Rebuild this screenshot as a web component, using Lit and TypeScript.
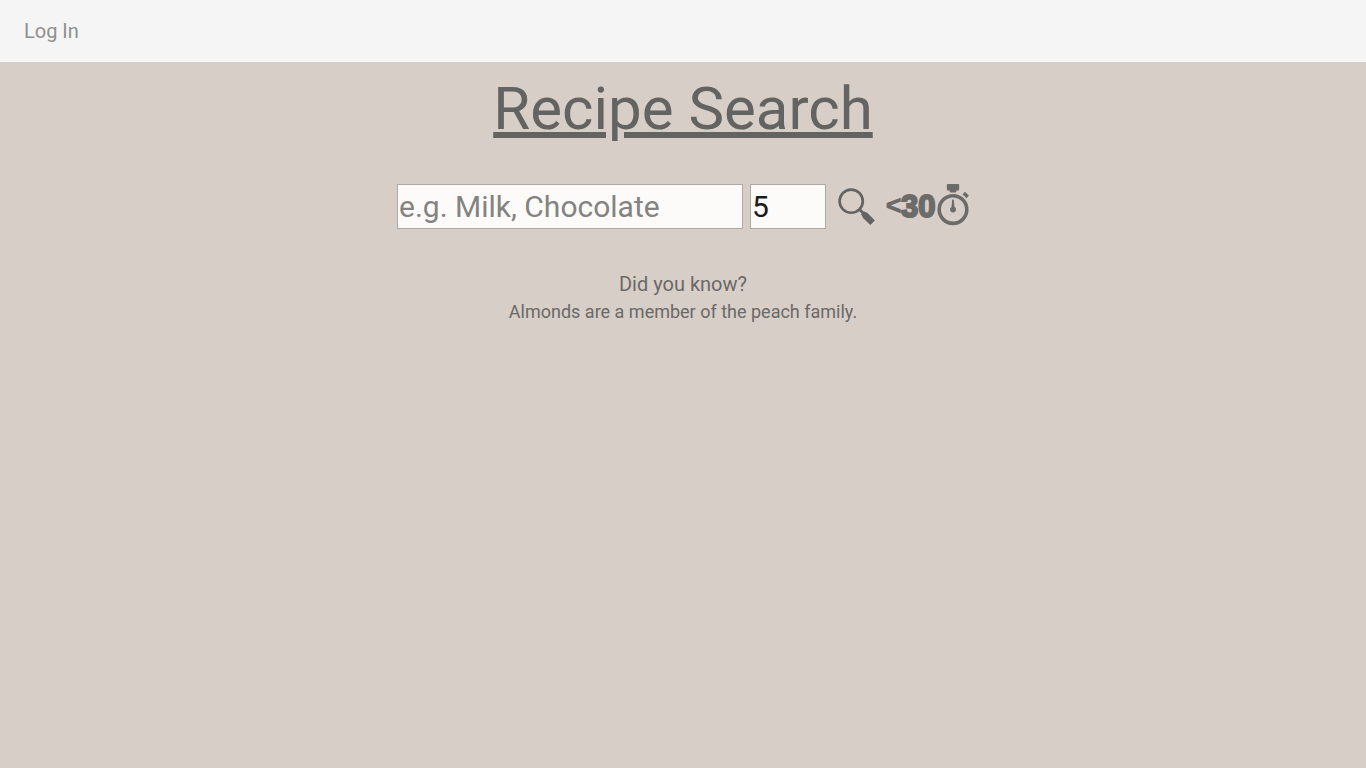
import { LitElement, html, css } from "lit";
import { customElement, state } from "lit/decorators.js";

@customElement("app-root")
export class AppRoot extends LitElement {
  static styles = css`
    :host {
      display: flex;
      flex-direction: column;
      min-height: 100vh;
      background: #d8cec8;
      color: #636361;
      font-family: Roboto, sans-serif;
    }
    .nav {
      background: #f5f5f5;
      padding: 19px 24px;
      font-size: 20px;
      line-height: 24px;
    }
    .login {
      color: #8f8f8f;
      text-decoration: none;
    }
    .main {
      display: flex;
      flex-direction: column;
      align-items: center;
    }
    .title {
      margin: 11px 0 39px;
      font-size: 60px;
      line-height: 72px;
      font-weight: 400;
      text-decoration: underline;
    }
    .search {
      display: flex;
      align-items: flex-start;
    }
    .field {
      box-sizing: border-box;
      margin: 0 7px 0 0;
      padding: 4px 1px;
      border: 1px solid #aca8a4;
      border-radius: 0;
      background: #fcfbf9;
      color: #1a1a18;
      font-family: inherit;
      font-size: 30px;
      line-height: 35px;
      outline: none;
    }
    .field::placeholder {
      color: #838381;
    }
    .ingredients {
      width: 346px;
    }
    .count {
      width: 76px;
      appearance: textfield;
    }
    .count::-webkit-inner-spin-button {
      display: none;
    }
    .icon {
      display: block;
      margin: 0;
      padding: 0;
      border: 0;
      background: none;
      color: inherit;
      cursor: pointer;
    }
    .icon svg {
      display: block;
    }
    .quick {
      margin-left: 6px;
      color: #6b6b69;
    }
    .digits {
      font-family: "Liberation Sans", sans-serif;
      font-size: 31px;
      font-weight: 700;
      fill: currentColor;
      stroke: currentColor;
      stroke-width: 2px;
    }
    .less {
      font-size: 26px;
      stroke-width: 1px;
    }
    .fact {
      margin-top: 43px;
      color: #696967;
      text-align: center;
    }
    .fact-title {
      margin: 0;
      font-size: 20px;
      line-height: 24px;
      font-weight: 400;
    }
    .fact-text {
      margin: 4px 0 0;
      font-size: 18px;
      line-height: 24px;
    }
  `;

  @state() private fact = "Almonds are a member of the peach family.";

  render() {
    return html`
      <nav class="nav"><a class="login" href="#login">Log In</a></nav>
      <main class="main">
        <h1 class="title">Recipe Search</h1>
        <form class="search" @submit=${(e: Event) => e.preventDefault()}>
          <input class="field ingredients" type="text" aria-label="Ingredients" placeholder="e.g. Milk, Chocolate" />
          <input class="field count" type="number" aria-label="Number of recipes" value="5" />
          <button class="icon" type="submit" aria-label="Search">
            <svg width="46" height="45" viewBox="0 0 46 45" fill="none" stroke="currentColor">
              <circle cx="18.2" cy="17.2" r="11.6" stroke-width="2.6" />
              <path d="M26 25l4 4" stroke-width="2.6" />
              <path d="M28 30.2l2.8-3 3.800 1.800 7.200 7.400-4.500 4.500-7.200-7z" fill="currentColor" stroke="none" />
            </svg>
          </button>
          <button class="icon quick" type="button" aria-label="Recipes under 30 minutes">
            <svg width="84" height="45" viewBox="0 0 84 45">
              <text class="digits less" x="1" y="30">&lt;</text>
              <text class="digits" x="16" y="33">30</text>
              <circle cx="68" cy="25.6" r="13.8" fill="none" stroke="currentColor" stroke-width="3.6" />
              <path d="M63 0h10q1.2 0 1.2 1.2v4q0 1.3-1.2 1.3h-1.500q0 2-1 2h-5q-1 0-1-2h-1.500q-1.200 0-1.200-1.300v-4q0-1.200 1.200-1.200z" fill="currentColor" />
              <path d="M77.500 10.300l2.500-2.500 4 4-2.500 2.500z" fill="currentColor" />
              <path d="M67.200 15.500h1.600l.7 7.400a3 3 0 1 1-3 0z" fill="currentColor" />
            </svg>
          </button>
        </form>
        <section class="fact">
          <h2 class="fact-title">Did you know?</h2>
          <p class="fact-text">${this.fact}</p>
        </section>
      </main>
    `;
  }
}
